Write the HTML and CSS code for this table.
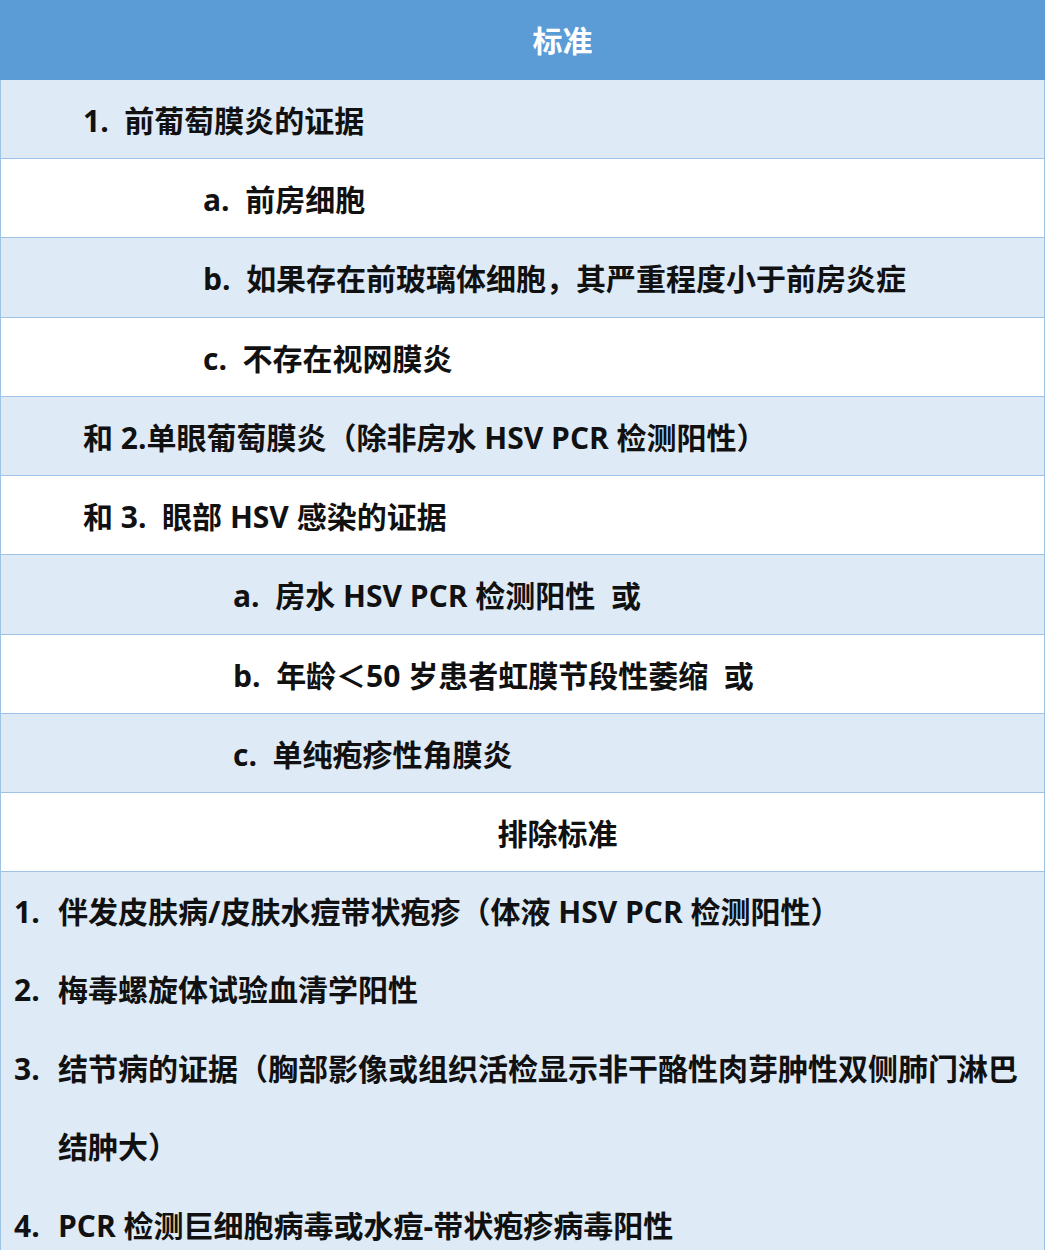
FILE: index.html
```html
<!DOCTYPE html>
<html lang="zh-CN">
<head>
<meta charset="utf-8">
<title>标准</title>
<link rel="stylesheet" href="styles.css">
</head>
<body>
<div class="table">
  <div class="head">标准</div>
  <div class="row light ind1">1.&nbsp;&nbsp;前葡萄膜炎的证据</div>
  <div class="row white ind2">a.&nbsp;&nbsp;前房细胞</div>
  <div class="row light ind2 tall">b.&nbsp;&nbsp;如果存在前玻璃体细胞，其严重程度小于前房炎症</div>
  <div class="row white ind2">c.&nbsp;&nbsp;不存在视网膜炎</div>
  <div class="row light ind1">和 2.单眼葡萄膜炎（除非房水 HSV PCR 检测阳性）</div>
  <div class="row white ind1">和 3.&nbsp;&nbsp;眼部 HSV 感染的证据</div>
  <div class="row light ind3 tall">a.&nbsp;&nbsp;房水 HSV PCR 检测阳性&nbsp;&nbsp;或</div>
  <div class="row white ind3">b.&nbsp;&nbsp;年龄＜50 岁患者虹膜节段性萎缩&nbsp;&nbsp;或</div>
  <div class="row light ind3">c.&nbsp;&nbsp;单纯疱疹性角膜炎</div>
  <div class="row white center">排除标准</div>
  <div class="block light">
    <div class="item"><span class="num">1.</span><span class="txt">伴发皮肤病/皮肤水痘带状疱疹（体液 HSV PCR 检测阳性）</span></div>
    <div class="item"><span class="num">2.</span><span class="txt">梅毒螺旋体试验血清学阳性</span></div>
    <div class="item"><span class="num">3.</span><span class="txt">结节病的证据（胸部影像或组织活检显示非干酪性肉芽肿性双侧肺门淋巴结肿大）</span></div>
    <div class="item"><span class="num">4.</span><span class="txt">PCR 检测巨细胞病毒或水痘-带状疱疹病毒阳性</span></div>
  </div>
</div>
</body>
</html>
```

FILE: styles.css
```css
html, body {
  margin: 0;
  padding: 0;
  background: #ffffff;
}

body {
  font-family: "Open Sans", "Noto Sans CJK SC", sans-serif;
  font-weight: 700;
  font-size: 30px;
  color: #111111;
}

.table {
  width: 1045px;
  box-sizing: border-box;
  border-left: 1px solid #9dc3e6;
  border-right: 1px solid #9dc3e6;
}

.head {
  height: 80px;
  margin: 0 -1px;
  background: #5b9bd6;
  color: #ffffff;
  display: flex;
  align-items: center;
  justify-content: center;
  padding-left: 80px;
  padding-bottom: 3px;
  box-sizing: border-box;
}

.row {
  height: 79px;
  box-sizing: border-box;
  border-bottom: 1px solid #9dc3e6;
  display: flex;
  align-items: center;
  padding-bottom: 1px;
  white-space: nowrap;
}

.row.tall { height: 80px; }

.light { background: #deeaf6; }
.white { background: #ffffff; }

.ind1 { padding-left: 82px; }
.ind2 { padding-left: 202px; }
.ind3 { padding-left: 232px; }

.center {
  justify-content: center;
  padding-left: 70px;
}

.block {
  padding: 1px 10px 0 13px;
}

.item {
  display: flex;
  line-height: 78.4px;
}

.num {
  width: 44px;
  flex: none;
}

.txt {
  flex: 1;
}
```
